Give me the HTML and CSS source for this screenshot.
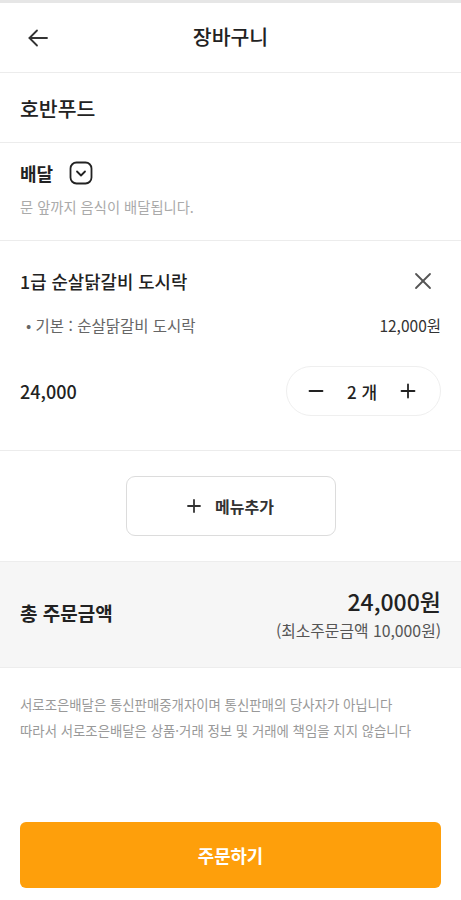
FILE: index.html
```html
<!DOCTYPE html>
<html lang="ko">
  <head>
    <meta charset="UTF-8" />
    <meta name="viewport" content="width=device-width, initial-scale=1.0" />
    <title>장바구니</title>
    <link rel="stylesheet" href="styles.css">
  </head>
  <body>
    <div class="status-strip"></div>

    <div class="header">
      <button class="back-btn" aria-label="뒤로">
        <svg width="24" height="24" viewBox="0 0 24 24" fill="none" stroke="#333" stroke-width="1.8" stroke-linecap="round" stroke-linejoin="round">
          <path d="M21 12H3.5" />
          <path d="M11 4.5L3.5 12L11 19.5" />
        </svg>
      </button>
      <h1>장바구니</h1>
    </div>

    <div class="store-row">호반푸드</div>

    <div class="delivery">
      <div class="delivery-title">
        <span>배달</span>
        <svg class="delivery-toggle" width="24" height="24" viewBox="0 0 24 24" fill="none" stroke="#222" stroke-width="1.8" stroke-linecap="round" stroke-linejoin="round">
          <rect x="1.5" y="1.5" width="21" height="21" rx="6" />
          <path d="M8 10.5L12 14.5L16 10.5" />
        </svg>
      </div>
      <div class="delivery-desc">문 앞까지 음식이 배달됩니다.</div>
    </div>

    <div class="cart-item">
      <div class="item-head">
        <div class="item-name">1급 순살닭갈비 도시락</div>
        <button class="remove-btn" aria-label="삭제">
          <svg width="20" height="20" viewBox="0 0 20 20" fill="none" stroke="#555" stroke-width="1.8" stroke-linecap="round">
            <path d="M3 3L17 17" />
            <path d="M17 3L3 17" />
          </svg>
        </button>
      </div>
      <div class="item-option">
        <span>• 기본 : 순살닭갈비 도시락</span>
        <span class="option-price">12,000원</span>
      </div>
      <div class="item-foot">
        <div class="item-total">24,000</div>
        <div class="qty">
          <svg width="16" height="16" viewBox="0 0 16 16" stroke="#222" stroke-width="1.8" stroke-linecap="round">
            <path d="M1.5 8H14.5" />
          </svg>
          <span class="qty-value">2 개</span>
          <svg width="16" height="16" viewBox="0 0 16 16" stroke="#222" stroke-width="1.8" stroke-linecap="round">
            <path d="M1.5 8H14.5" />
            <path d="M8 1.5V14.5" />
          </svg>
        </div>
      </div>
    </div>

    <div class="add-menu">
      <button class="add-menu-btn">
        <svg width="14" height="14" viewBox="0 0 14 14" stroke="#333" stroke-width="1.8" stroke-linecap="round">
          <path d="M1 7H13" />
          <path d="M7 1V13" />
        </svg>
        <span>메뉴추가</span>
      </button>
    </div>

    <div class="summary">
      <div class="summary-label">총 주문금액</div>
      <div class="summary-amount">
        <div class="summary-total">24,000원</div>
        <div class="summary-min">(최소주문금액 10,000원)</div>
      </div>
    </div>

    <div class="notice">
      <p>서로조은배달은 통신판매중개자이며 통신판매의 당사자가 아닙니다</p>
      <p>따라서 서로조은배달은 상품·거래 정보 및 거래에 책임을 지지 않습니다</p>
    </div>

    <div class="order">
      <button class="order-btn">주문하기</button>
    </div>
  </body>
</html>
```

FILE: styles.css
```css
* {
  margin: 0;
  padding: 0;
  box-sizing: border-box;
}

body {
  font-family: "Noto Sans CJK KR", "Noto Sans", sans-serif;
  width: 461px;
  min-height: 900px;
  background: #fff;
  color: #222;
  display: flex;
  flex-direction: column;
}

button {
  font-family: inherit;
  background: none;
  border: none;
  cursor: pointer;
  color: inherit;
}

.status-strip {
  height: 3px;
  background: #e6e6e6;
}

/* Header */
.header {
  height: 70px;
  display: flex;
  align-items: center;
  justify-content: center;
  position: relative;
  border-bottom: 1px solid #ececec;
}

.back-btn {
  position: absolute;
  left: 26px;
  top: 23px;
  width: 24px;
  height: 24px;
  display: flex;
}

h1 {
  font-size: 20.5px;
  font-weight: 500;
  line-height: 28px;
  margin-top: -3px;
}

.store-row {
  height: 70px;
  padding: 0 20px;
  display: flex;
  align-items: center;
  font-size: 20.5px;
  font-weight: 500;
  border-bottom: 1px solid #ececec;
}

/* Delivery */
.delivery {
  height: 98px;
  padding: 18px 20px 0;
  border-bottom: 1px solid #ececec;
}

.delivery-title {
  display: flex;
  align-items: center;
  gap: 16px;
  font-size: 18px;
  font-weight: 700;
  height: 24px;
}

.delivery-desc {
  margin-top: 11px;
  font-size: 14.3px;
  color: #aaa;
}

/* Cart item */
.cart-item {
  height: 210px;
  padding: 27px 20px 0;
  border-bottom: 1px solid #ececec;
}

.item-head {
  display: flex;
  align-items: center;
  justify-content: space-between;
  height: 26px;
}

.item-name {
  font-size: 17.8px;
  font-weight: 500;
}

.remove-btn {
  width: 20px;
  height: 20px;
  margin-right: 8px;
  display: flex;
}

.item-option {
  display: flex;
  justify-content: space-between;
  margin-top: 20px;
  padding-left: 6px;
  font-size: 15.5px;
  line-height: 22px;
  color: #666;
}

.option-price {
  color: #333;
}

.item-foot {
  display: flex;
  align-items: center;
  justify-content: space-between;
  margin-top: 30px;
}

.item-total {
  font-size: 18px;
  font-weight: 500;
}

.qty {
  width: 155px;
  height: 50px;
  border: 1px solid #efefef;
  border-radius: 25px;
  display: flex;
  align-items: center;
  justify-content: space-between;
  padding: 0 24px 0 21px;
}

.qty-value {
  font-size: 17px;
  font-weight: 500;
}

/* Add menu */
.add-menu {
  height: 110px;
  display: flex;
  align-items: center;
  justify-content: center;
}

.add-menu-btn {
  width: 210px;
  height: 60px;
  border: 1px solid #dcdcdc;
  border-radius: 9px;
  display: flex;
  align-items: center;
  justify-content: center;
  gap: 14px;
  font-size: 16px;
  font-weight: 700;
  color: #333;
}

/* Summary */
.summary {
  height: 107px;
  background: #f6f6f6;
  border-top: 1px solid #ededed;
  border-bottom: 1px solid #ededed;
  display: flex;
  align-items: center;
  justify-content: space-between;
  padding: 0 20px;
}

.summary-label {
  font-size: 19px;
  font-weight: 700;
  margin-top: -4px;
}

.summary-amount {
  text-align: right;
}

.summary-total {
  font-size: 23px;
  font-weight: 500;
  line-height: 30px;
}

.summary-min {
  font-size: 15.8px;
  line-height: 24px;
  color: #555;
  margin-top: 3px;
}

/* Notice */
.notice {
  padding: 23px 20px 0;
  font-size: 13.4px;
  color: #999;
  line-height: 26px;
}

.order {
  margin-top: auto;
  padding: 0 20px 12px;
}

.order-btn {
  width: 100%;
  height: 66px;
  border-radius: 6px;
  background: #fe9f0b;
  color: #fff;
  font-size: 17.8px;
  font-weight: 700;
}
```
